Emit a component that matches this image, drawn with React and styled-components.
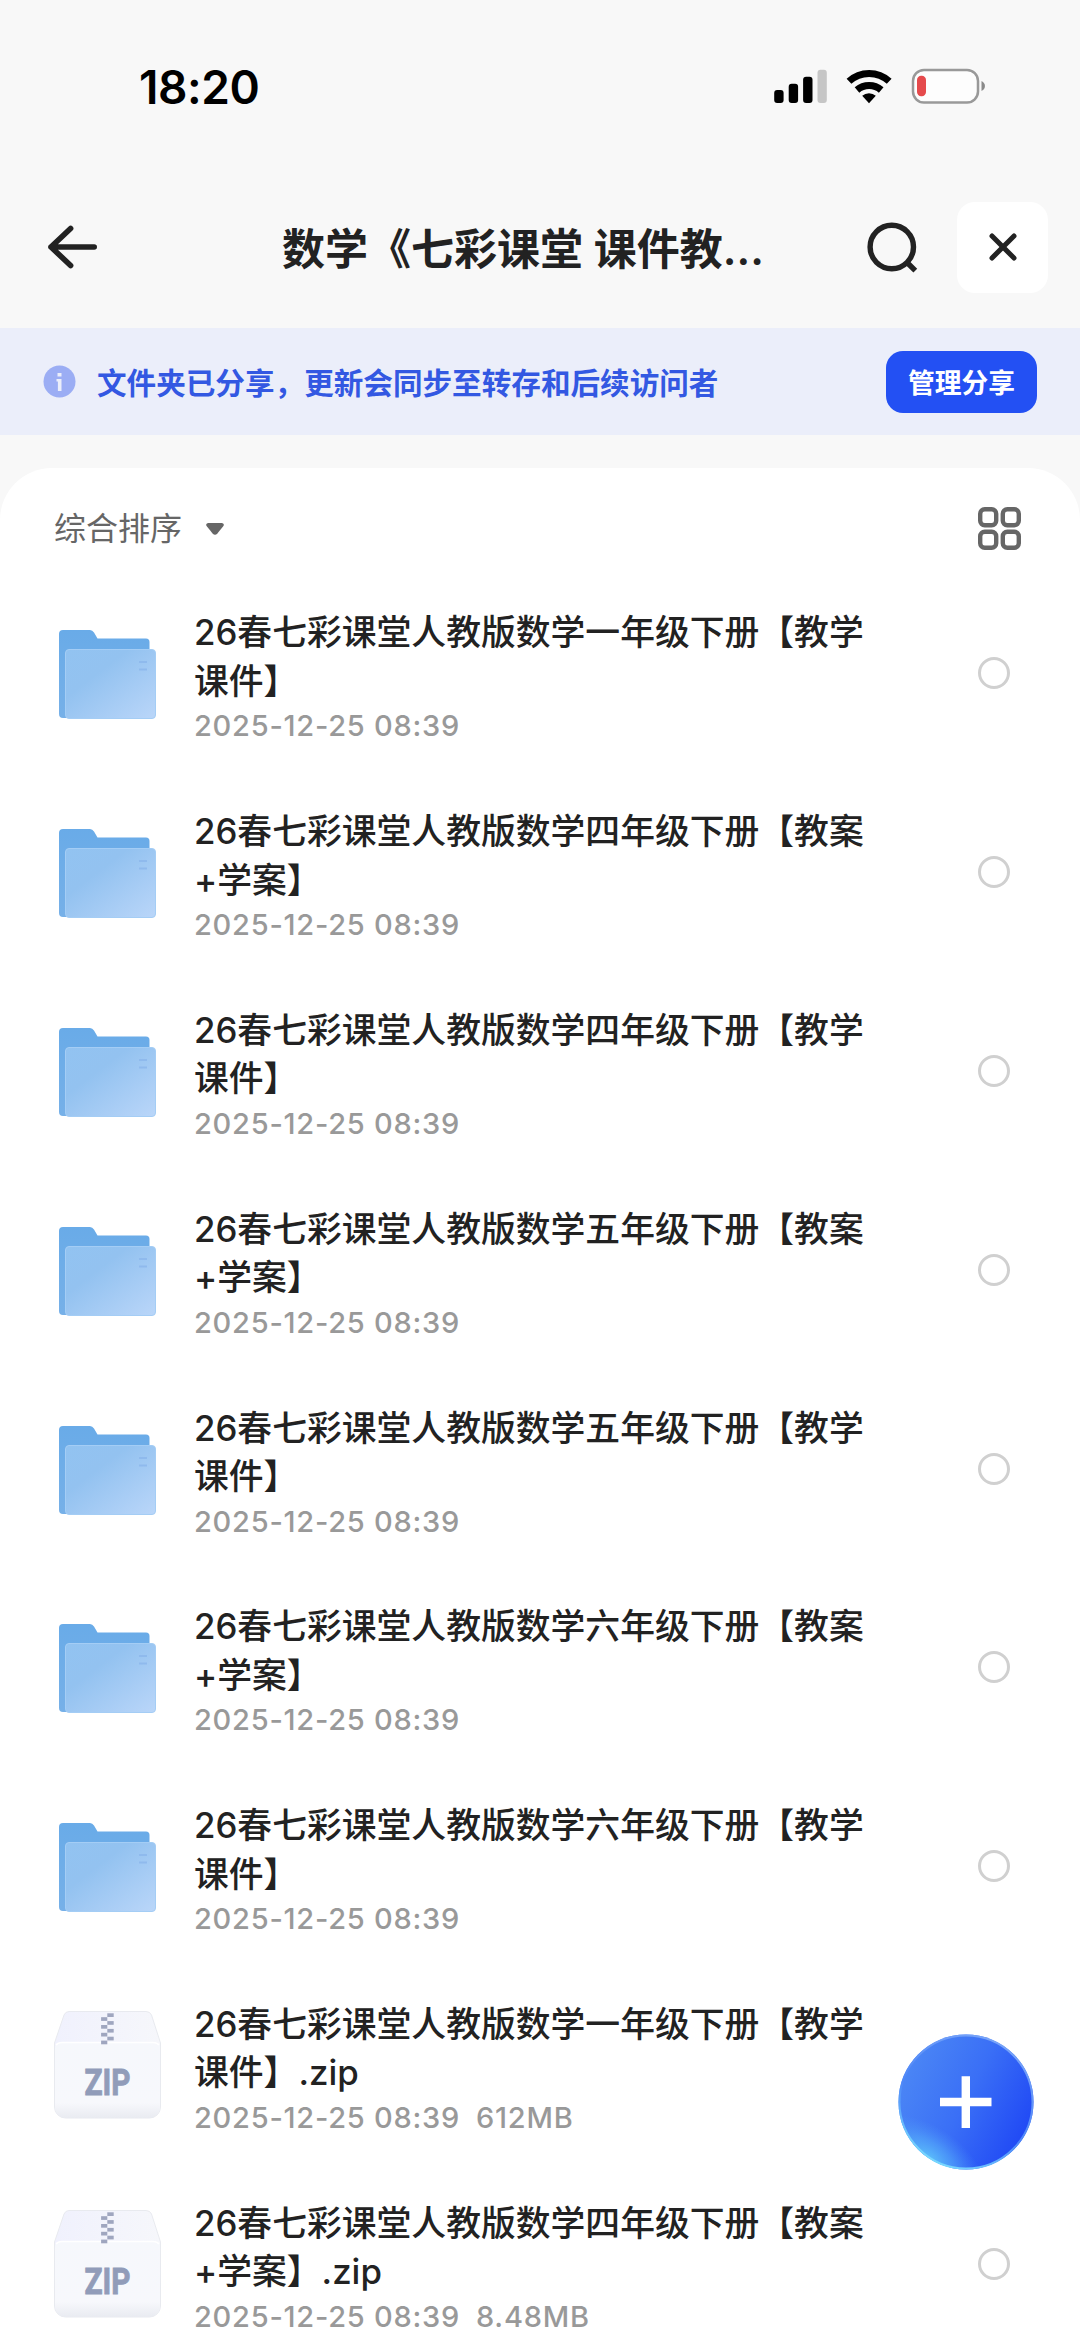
import React from "react";
import styled, { createGlobalStyle } from "styled-components";

const GlobalStyle = createGlobalStyle`
  * { box-sizing: border-box; }
  body { margin: 0; background: #fff; }
  button { border: 0; padding: 0; background: none; font: inherit; color: inherit; display: flex; }
  svg { display: block; flex: none; }
`;

const Screen = styled.main`
  width: 1080px;
  height: 2348px;
  overflow: hidden;
  position: relative;
  display: flex;
  flex-direction: column;
  background: #f8f8f8;
  color: #222;
  font-family: Inter, "Noto Sans CJK SC", sans-serif;
`;

const StatusBar = styled.div`
  height: 174px;
  flex: none;
  padding: 0 94px 0 139px;
  display: flex;
  align-items: center;
  justify-content: space-between;
`;

const Clock = styled.time`
  font-size: 46px;
  font-weight: 600;
  line-height: 56px;
  letter-spacing: -0.4px;
  color: #000;
`;

const NavBar = styled.header`
  height: 154px;
  flex: none;
  padding: 0 32px 8px 46px;
  display: flex;
  align-items: center;
`;

const Title = styled.h1`
  flex: 1;
  margin: 3px 0 0 183px;
  font-size: 43px;
  line-height: 60px;
  font-weight: 600;
  white-space: nowrap;
`;

const CloseButton = styled.button`
  width: 91px;
  height: 91px;
  margin-left: 39px;
  border-radius: 18px;
  background: #fff;
  align-items: center;
  justify-content: center;
`;

const Banner = styled.section`
  height: 107px;
  flex: none;
  padding: 0 43px;
  display: flex;
  align-items: center;
  background: #ebeefa;
`;

const BannerText = styled.p`
  flex: 1;
  margin: 3px 0 0 21px;
  font-size: 29.6px;
  line-height: 40px;
  font-weight: 600;
  color: #3358e2;
`;

const ManageButton = styled.button`
  width: 151px;
  height: 62px;
  border-radius: 17px;
  background: #2350f3;
  color: #fff;
  font-size: 26.8px;
  font-weight: 700;
  align-items: center;
  justify-content: center;
`;

const Panel = styled.section`
  flex: none;
  margin-top: 33px;
  border-radius: 52px 52px 0 0;
  background: #fff;
`;

const SortBar = styled.div`
  height: 106px;
  padding: 15px 59px 0 54px;
  display: flex;
  align-items: center;
  justify-content: space-between;
`;

const SortButton = styled.button`
  align-items: center;
  gap: 23px;
  font-size: 32px;
  line-height: 44px;
  color: #666;
`;

const FileList = styled.ul`
  list-style: none;
  margin: 0;
  padding: 0;
`;

const FileRow = styled.li`
  height: 198.8px;
  padding: 0 70px 0 54px;
  display: flex;
  align-items: center;
`;

const FileInfo = styled.div`
  width: 690px;
  margin: 8px auto 0 33px;
`;

const FileName = styled.div`
  font-size: 34.8px;
  line-height: 48.5px;
  font-weight: 450;
  white-space: pre-line;
`;

const FileMeta = styled.div`
  display: flex;
  gap: 16px;
  font-size: 29px;
  line-height: 41px;
  font-weight: 450;
  letter-spacing: 0.75px;
  color: #999;
`;

const SelectRing = styled.span`
  width: 32px;
  height: 32px;
  border: 3px solid #d0d0d0;
  border-radius: 50%;
`;

const AddButton = styled.button`
  position: absolute;
  left: 898px;
  top: 2034px;
`;

const StatusIcons = () => (
  <svg width="214" height="40" viewBox="772 68 214 40">
    <g fill="#000">
      <rect x="774.2" y="91" width="9.4" height="13" rx="3" />
      <rect x="788.7" y="84.7" width="9.4" height="19.3" rx="3" />
      <rect x="803.1" y="77.7" width="9.4" height="26.3" rx="3" />
      <rect x="817.5" y="70.7" width="9.3" height="33.3" rx="3" fill="#c6c6c6" />
    </g>
    <g fill="none" stroke="#000" strokeWidth="7">
      <path d="M849 82.300a29.600 29.600 0 0 1 40.200 0" />
      <path d="M857 91a18.300 18.300 0 0 1 24.200 0" />
    </g>
    <path d="M869 104.200l-6.800-7.400a10 10 0 0 1 13.600 0z" fill="#000" />
    <rect x="913" y="71" width="65" height="32.600" rx="11" fill="#fdfdfd" stroke="#999" strokeWidth="2.500" />
    <rect x="917" y="76.700" width="9" height="20.600" rx="4.200" fill="#e54a4c" />
    <path d="M981.500 82c4.600 2 4.600 8 0 10z" fill="#8a8a8a" />
  </svg>
);

const BackIcon = () => (
  <svg width="53" height="48" viewBox="46 223 53 48" fill="none" stroke="#222" strokeWidth="5.6" strokeLinecap="round" strokeLinejoin="round">
    <path d="M94.200 247H51M70.600 228.500L51 247l19.600 18.500" />
  </svg>
);

const SearchIcon = () => (
  <svg width="52" height="52" viewBox="866 221 52 52" fill="none" stroke="#222" strokeWidth="5.4">
    <circle cx="891.800" cy="247" r="21.700" />
    <path d="M907 262.500l8.300 8.200" />
  </svg>
);

const CloseIcon = () => (
  <svg width="30" height="30" viewBox="0 0 30 30" stroke="#222" strokeWidth="5" strokeLinecap="round">
    <path d="M4 4l22 22M26 4L4 26" />
  </svg>
);

const InfoIcon = () => (
  <svg width="33" height="33" viewBox="0 0 33 33">
    <circle cx="16.500" cy="16.500" r="16" fill="#9badf4" />
    <path d="M14.500 8h4v3.500h-4zM13.500 14h5v12h-3.600v-9.600h-1.400z" fill="#ebeefa" />
  </svg>
);

const CaretIcon = () => (
  <svg width="20" height="14" viewBox="0 0 20 14">
    <path d="M3 1h14q3 1 1.200 3.300l-5.800 7.200q-2.400 2.600-4.800 0L1.800 4.300Q0 2 3 1z" fill="#666" />
  </svg>
);

const GridIcon = () => (
  <svg width="43" height="43" viewBox="0 0 43 43" fill="none" stroke="#666" strokeWidth="4.4">
    {[2.2, 24.800].map((y) => [2.2, 24.800].map((x) => (
      <rect key={`${x}-${y}`} x={x} y={y} width="16" height="16" rx="4.500" />
    )))}
  </svg>
);

const FolderIcon = () => (
  <svg width="107" height="108" viewBox="0 -1 107 108">
    <defs>
      <linearGradient id="folderFront" x1="0" y1="0" x2="1" y2="1">
        <stop offset="0" stopColor="#92c3f1" />
        <stop offset="0.350" stopColor="#93c2f0" />
        <stop offset="1" stopColor="#bad6f9" />
      </linearGradient>
      <linearGradient id="folderBack" x1="0" y1="0" x2="0" y2="1">
        <stop offset="0" stopColor="#69abe8" />
        <stop offset="1" stopColor="#76b0e8" />
      </linearGradient>
    </defs>
    <path d="M5 14a4 4 0 0 1 4-4h27q2.500 0 4 2.500l3.500 6H92a3.500 3.500 0 0 1 3.500 3.500v76H9a4 4 0 0 1-4-4z" fill="url(#folderBack)" />
    <rect x="11.500" y="29.500" width="90" height="69" rx="3.500" fill="url(#folderFront)" stroke="#a4cdf5" />
    <path d="M85 42h8M85 49.500h8" stroke="#8fbaed" strokeWidth="2" />
  </svg>
);

const ZIPPER_ROWS = [0, 1, 2, 3];

const ZipIcon = () => (
  <svg width="107" height="108" viewBox="0 0 107 108">
    <defs>
      <linearGradient id="zipFace" x1="0" y1="0" x2="0" y2="1">
        <stop offset="0" stopColor="#f6f8fc" />
        <stop offset="0.800" stopColor="#f7f8fc" />
        <stop offset="1" stopColor="#e9ebf1" />
      </linearGradient>
      <linearGradient id="zipLid" x1="0" y1="0" x2="1" y2="0">
        <stop offset="0" stopColor="#f0f1fd" />
        <stop offset="1" stopColor="#f6f7fb" />
      </linearGradient>
    </defs>
    <path d="M15 .5h77q4 0 5.500 3.500l9 28v64a11 11 0 0 1-11 11h-84a11 11 0 0 1-11-11V32l9.500-28Q11.500 .5 15 .5z" fill="url(#zipLid)" stroke="#e8eaef" />
    <path d="M1 38q0-7 7-7h91q7 0 7 7v58a11 11 0 0 1-11 11H12a11 11 0 0 1-11-11z" fill="url(#zipFace)" />
    <path d="M2 34q2-2.500 6-2.500h91q4 0 6 2.500" fill="none" stroke="#fff" strokeWidth="1.500" />
    {ZIPPER_ROWS.map((i) => (
      <g key={i} fill="#9fa6bf">
        <rect x="53.300" y={2.300 + i * 7.800} width="6.400" height="3.700" />
        <rect x="47.100" y={6.200 + i * 7.800} width="6.200" height="3.700" />
      </g>
    ))}
    <text x="30.500" y="84" fontFamily="Roboto, sans-serif" fontWeight="700" fontSize="36.500" textLength="46" lengthAdjust="spacingAndGlyphs" fill="#919cb9" stroke="#919cb9" strokeWidth="0.900">ZIP</text>
  </svg>
);

const AddIcon = () => (
  <svg width="136" height="136" viewBox="0 0 136 136">
    <defs>
      <linearGradient id="addBase" x1="0.050" y1="0.250" x2="0.950" y2="0.700">
        <stop offset="0" stopColor="#4b86f5" />
        <stop offset="0.500" stopColor="#3a6ff6" />
        <stop offset="1" stopColor="#214af5" />
      </linearGradient>
      <radialGradient id="addGlow" cx="0" cy="0" r="1" gradientUnits="userSpaceOnUse" gradientTransform="translate(30 124) rotate(33) scale(62 32)">
        <stop offset="0" stopColor="#5cc0fb" />
        <stop offset="0.500" stopColor="#56b0fa" stopOpacity="0.550" />
        <stop offset="1" stopColor="#4f98f8" stopOpacity="0" />
      </radialGradient>
      <linearGradient id="addRim" x1="0.200" y1="1" x2="0.700" y2="0">
        <stop offset="0" stopColor="#7fe6ff" />
        <stop offset="0.450" stopColor="#4d86f8" />
        <stop offset="1" stopColor="#79a5f8" />
      </linearGradient>
    </defs>
    <circle cx="68" cy="68" r="67.500" fill="url(#addBase)" />
    <circle cx="68" cy="68" r="67.500" fill="url(#addGlow)" />
    <circle cx="68" cy="68" r="66.500" fill="none" stroke="url(#addRim)" strokeWidth="2" />
    <path d="M42 68h51.500M67.800 42.300v51.700" stroke="#fff" strokeWidth="8.400" />
  </svg>
);

const DATE = "2025-12-25 08:39";
const PREFIX = "26春七彩课堂人教版数学";

const FILES = [
  { type: "folder", name: `${PREFIX}一年级下册【教学\n课件】` },
  { type: "folder", name: `${PREFIX}四年级下册【教案\n+学案】` },
  { type: "folder", name: `${PREFIX}四年级下册【教学\n课件】` },
  { type: "folder", name: `${PREFIX}五年级下册【教案\n+学案】` },
  { type: "folder", name: `${PREFIX}五年级下册【教学\n课件】` },
  { type: "folder", name: `${PREFIX}六年级下册【教案\n+学案】` },
  { type: "folder", name: `${PREFIX}六年级下册【教学\n课件】` },
  { type: "zip", name: `${PREFIX}一年级下册【教学\n课件】.zip`, size: "612MB" },
  { type: "zip", name: `${PREFIX}四年级下册【教案\n+学案】.zip`, size: "8.48MB" },
];

export default function App() {
  return (
    <Screen>
      <GlobalStyle />
      <StatusBar>
        <Clock>18:20</Clock>
        <StatusIcons />
      </StatusBar>
      <NavBar>
        <button aria-label="返回"><BackIcon /></button>
        <Title>数学《七彩课堂 课件教...</Title>
        <button aria-label="搜索"><SearchIcon /></button>
        <CloseButton aria-label="关闭"><CloseIcon /></CloseButton>
      </NavBar>
      <Banner>
        <InfoIcon />
        <BannerText>文件夹已分享，更新会同步至转存和后续访问者</BannerText>
        <ManageButton>管理分享</ManageButton>
      </Banner>
      <Panel>
        <SortBar>
          <SortButton>综合排序<CaretIcon /></SortButton>
          <button aria-label="网格视图"><GridIcon /></button>
        </SortBar>
        <FileList>
          {FILES.map((file) => (
            <FileRow key={file.name}>
              {file.type === "folder" ? <FolderIcon /> : <ZipIcon />}
              <FileInfo>
                <FileName>{file.name}</FileName>
                <FileMeta>
                  <span>{DATE}</span>
                  {file.size && <span>{file.size}</span>}
                </FileMeta>
              </FileInfo>
              <SelectRing />
            </FileRow>
          ))}
        </FileList>
      </Panel>
      <AddButton aria-label="新建"><AddIcon /></AddButton>
    </Screen>
  );
}
